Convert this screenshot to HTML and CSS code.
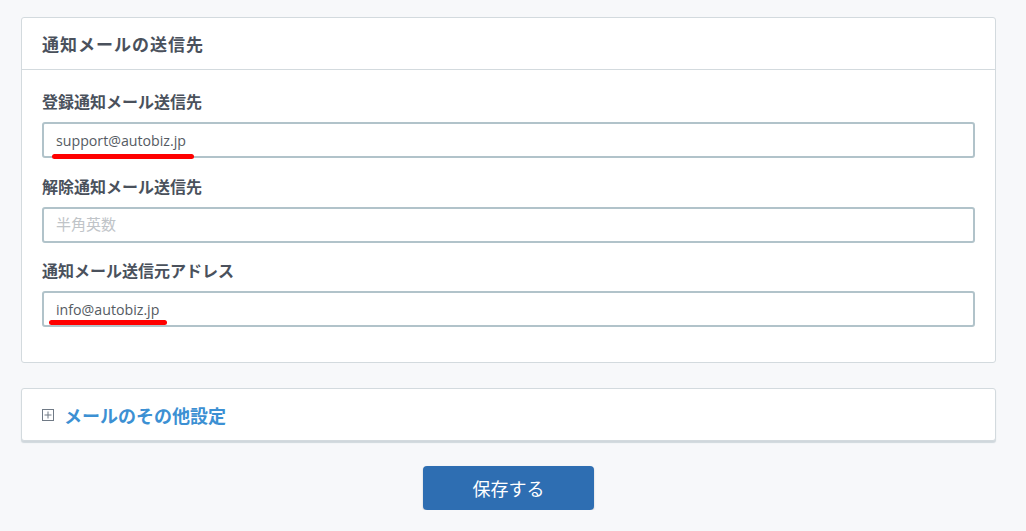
FILE: index.html
```html
<!DOCTYPE html>
<html lang="ja">
<head>
  <meta charset="UTF-8" />
  <meta name="viewport" content="width=device-width, initial-scale=1.0"/>
  <title>通知メールの送信先</title>

  <link rel="stylesheet" href="styles.css">
</head>
<body>
  <div class="container">
    <section class="card">
      <div class="card-header">
        <h2>通知メールの送信先</h2>
      </div>
      <div class="card-body">
        <div class="field">
          <label for="regMail">登録通知メール送信先</label>
          <div class="input-wrap">
            <input type="text" id="regMail" value="support@autobiz.jp" placeholder="半角英数" />
            <span class="mark mark-support"></span>
          </div>
        </div>

        <div class="field">
          <label for="cancelMail">解除通知メール送信先</label>
          <div class="input-wrap">
            <input type="text" id="cancelMail" value="" placeholder="半角英数" />
          </div>
        </div>

        <div class="field">
          <label for="fromMail">通知メール送信元アドレス</label>
          <div class="input-wrap">
            <input type="text" id="fromMail" value="info@autobiz.jp" placeholder="半角英数" />
            <span class="mark mark-info"></span>
          </div>
        </div>
      </div>
    </section>

    <section class="card card-collapsed">
      <button type="button" class="toggle">
        <svg class="toggle-icon" width="12" height="12" viewBox="0 0 12 12" aria-hidden="true">
          <rect x="0.5" y="0.5" width="11" height="11" fill="none" stroke="#707a86" stroke-width="1"/>
          <line x1="6" y1="2.5" x2="6" y2="9.5" stroke="#707a86" stroke-width="1"/>
          <line x1="2.5" y1="6" x2="9.5" y2="6" stroke="#707a86" stroke-width="1"/>
        </svg>
        <span>メールのその他設定</span>
      </button>
    </section>

    <div class="actions">
      <button type="submit" class="btn-save">保存する</button>
    </div>
  </div>
</body>
</html>
```

FILE: styles.css
```css
:root {
  --body-bg-color: #f7f8fa;
  --card-color: #ffffff;
  --card-border: #d3dade;
  --title-color: #4a515c;
  --input-border-color: #b1c3ca;
  --input-text: #555b63;
  --link-color: #3c90d3;
  --button-color: #2e6eb2;
  --font-stack: "Open Sans", "Noto Sans CJK JP", sans-serif;
}

body {
  margin: 0;
  background-color: var(--body-bg-color);
  font-family: var(--font-stack);
  color: var(--title-color);
}

.container {
  width: 975px;
  margin-left: 21px;
  padding-top: 17px;
}

.card {
  background-color: var(--card-color);
  border: 1px solid var(--card-border);
  border-radius: 3px;
  box-sizing: border-box;
}

.card-header {
  height: 52px;
  padding: 0 20px;
  display: flex;
  align-items: center;
  border-bottom: 1px solid var(--card-border);
  box-sizing: border-box;
}

.card-header h2 {
  margin: 0;
  font-size: 17px;
  font-weight: bold;
  letter-spacing: 1px;
  color: var(--title-color);
}

.card-body {
  padding: 22px 20px 35px;
  display: flex;
  flex-direction: column;
  gap: 18.5px;
}

.field label {
  display: block;
  height: 20px;
  line-height: 20px;
  margin-bottom: 10px;
  font-size: 16px;
  font-weight: bold;
  color: var(--title-color);
}

.input-wrap {
  position: relative;
}

.input-wrap input {
  display: block;
  width: 100%;
  height: 36px;
  padding: 0 12px;
  border: 2px solid var(--input-border-color);
  border-radius: 3px;
  box-sizing: border-box;
  font-family: var(--font-stack);
  font-size: 14.2px;
  color: var(--input-text);
  background: #fff;
  outline: none;
}

.input-wrap input::placeholder {
  color: #c0c4c8;
  font-size: 15px;
}

/* red annotation strokes drawn over the inputs */
.mark {
  position: absolute;
  height: 5px;
  border-radius: 3px;
  background-color: #ff0000;
}

.mark-support {
  left: 10px;
  top: 32px;
  width: 142px;
}

.mark-info {
  left: 7px;
  top: 29px;
  width: 118px;
}

.card-collapsed {
  margin-top: 25px;
  height: 53px;
  box-shadow: 0 2px 1px rgba(160, 175, 185, 0.45);
}

.toggle {
  display: flex;
  align-items: center;
  gap: 10px;
  width: 100%;
  height: 100%;
  padding: 0 20px;
  border: none;
  background: none;
  font-family: var(--font-stack);
  font-size: 18px;
  font-weight: bold;
  color: var(--link-color);
  cursor: pointer;
  text-align: left;
}

.toggle-icon {
  flex: none;
}

.actions {
  display: flex;
  justify-content: center;
  margin-top: 25px;
}

.btn-save {
  width: 171px;
  height: 44px;
  border: none;
  border-radius: 4px;
  background-color: var(--button-color);
  color: #fff;
  font-family: var(--font-stack);
  font-size: 18px;
  cursor: pointer;
  box-shadow: 0 1px 2px rgba(0, 0, 0, 0.2);
}
```
